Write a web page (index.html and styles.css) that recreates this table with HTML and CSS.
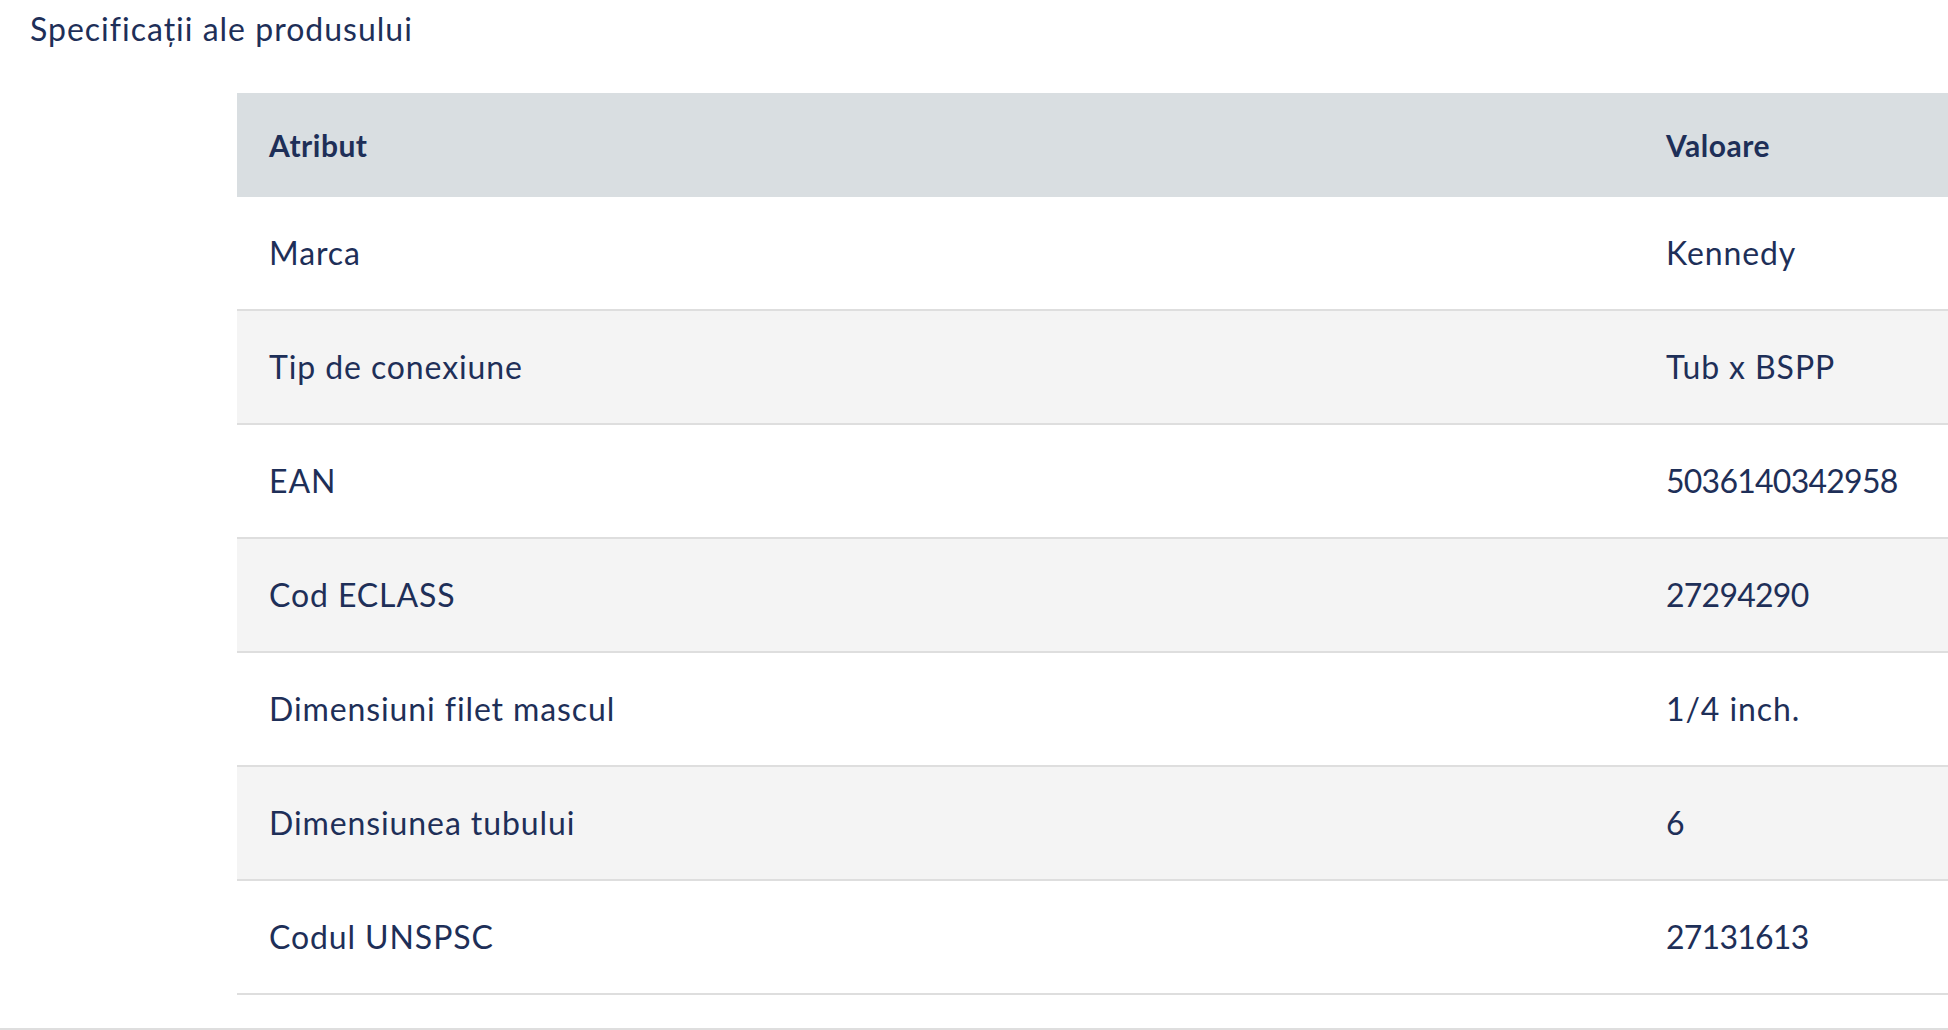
FILE: index.html
```html
<!DOCTYPE html>
<html lang="ro">
<head>
<meta charset="utf-8">
<title>Specificații ale produsului</title>
<link rel="stylesheet" href="styles.css">
</head>
<body>
<section class="specs">
  <h2 class="specs-title">Specificații ale produsului</h2>
  <div class="specs-table">
    <div class="row head"><div class="cell">Atribut</div><div class="cell">Valoare</div></div>
    <div class="row"><div class="cell">Marca</div><div class="cell">Kennedy</div></div>
    <div class="row alt"><div class="cell">Tip de conexiune</div><div class="cell">Tub x BSPP</div></div>
    <div class="row"><div class="cell">EAN</div><div class="cell num">5036140342958</div></div>
    <div class="row alt"><div class="cell">Cod ECLASS</div><div class="cell num">27294290</div></div>
    <div class="row"><div class="cell">Dimensiuni filet mascul</div><div class="cell">1/4 inch.</div></div>
    <div class="row alt"><div class="cell">Dimensiunea tubului</div><div class="cell num">6</div></div>
    <div class="row"><div class="cell">Codul UNSPSC</div><div class="cell num">27131613</div></div>
  </div>
</section>
<div class="page-rule"></div>
</body>
</html>
```

FILE: styles.css
```css
html, body {
  margin: 0;
  padding: 0;
  background: #ffffff;
}
body {
  font-family: Lato, "Noto Sans", sans-serif;
  color: #1e2f58;
  width: 1948px;
  overflow: hidden;
}
.specs {
  display: flex;
  flex-direction: column;
}
.specs-title {
  margin: 0;
  padding: 10px 0 0 30px;
  height: 93px;
  box-sizing: border-box;
  font-size: 32px;
  font-weight: 400;
  line-height: 38px;
  letter-spacing: 1px;
}
.specs-table {
  margin-left: 237px;
  display: flex;
  flex-direction: column;
}
.row {
  display: grid;
  grid-template-columns: 1397px 1fr;
  height: 114px;
  box-sizing: border-box;
  border-bottom: 2px solid #dedede;
  background: #ffffff;
  align-items: center;
}
.row.alt {
  background: #f4f4f4;
}
.row.head {
  height: 104px;
  background: #d9dee1;
  border-bottom: none;
}
.cell {
  padding-left: 32px;
  font-size: 32px;
  line-height: 36px;
  letter-spacing: 0.9px;
}
.row.head .cell {
  font-size: 30px;
  font-weight: 700;
  letter-spacing: 0.5px;
}
.cell.num {
  letter-spacing: -0.75px;
}
.page-rule {
  margin-top: 33px;
  height: 2px;
  background: #dedede;
}
```
